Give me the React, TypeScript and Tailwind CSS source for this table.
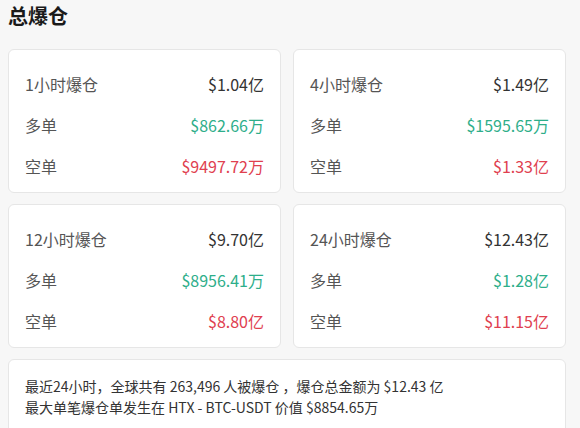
import React from "react";

type Row = { label: string; value: string; tone: "main" | "up" | "down" };

const cards: { title: string; total: string; long: string; short: string }[] = [
  { title: "1小时爆仓", total: "$1.04亿", long: "$862.66万", short: "$9497.72万" },
  { title: "4小时爆仓", total: "$1.49亿", long: "$1595.65万", short: "$1.33亿" },
  { title: "12小时爆仓", total: "$9.70亿", long: "$8956.41万", short: "$8.80亿" },
  { title: "24小时爆仓", total: "$12.43亿", long: "$1.28亿", short: "$11.15亿" },
];

const toneClass = {
  main: "text-[#333333]",
  up: "text-[#2eae8a]",
  down: "text-[#e0404f]",
};

const LiqCard = ({ title, total, long, short }: (typeof cards)[number]) => {
  const rows: Row[] = [
    { label: title, value: total, tone: "main" },
    { label: "多单", value: long, tone: "up" },
    { label: "空单", value: short, tone: "down" },
  ];
  return (
    <div className="bg-white border border-[#e6e6e6] rounded-md px-4 pt-6 pb-4 flex flex-col gap-[21px]">
      {rows.map((r) => (
        <div key={r.label} className="flex items-center justify-between h-5 text-base">
          <span className="text-[#555555]">{r.label}</span>
          <span className={toneClass[r.tone]}>{r.value}</span>
        </div>
      ))}
    </div>
  );
};

export default function App() {
  return (
    <div
      className="w-[580px] h-[428px] overflow-hidden bg-[#f7f7f7] pl-2"
      style={{ fontFamily: '"Noto Sans CJK SC", "Noto Sans", sans-serif' }}
    >
      <div className="w-[558px]">
        <h2 className="text-xl font-bold text-[#1a1a1a] leading-none pt-[6px] h-[49px]">
          总爆仓
        </h2>
        <div className="grid grid-cols-2 gap-x-3 gap-y-[11px]">
          {cards.map((c) => (
            <LiqCard key={c.title} {...c} />
          ))}
        </div>
        <div className="mt-[11px] bg-white border border-[#e6e6e6] rounded-md px-4 pt-4 pb-4 text-sm text-[#333333] leading-[21px]">
          <p>最近24小时，全球共有 263,496 人被爆仓 ，爆仓总金额为 $12.43 亿</p>
          <p>最大单笔爆仓单发生在 HTX - BTC-USDT 价值 $8854.65万</p>
        </div>
      </div>
    </div>
  );
}
